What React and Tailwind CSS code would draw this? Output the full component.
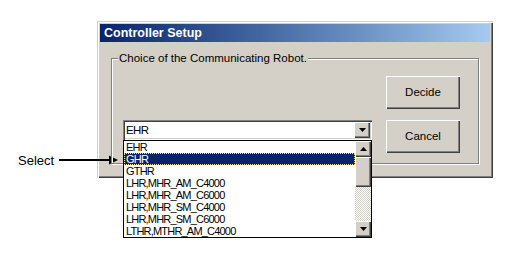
const items = [
  "EHR",
  "GHR",
  "GTHR",
  "LHR,MHR_AM_C4000",
  "LHR,MHR_AM_C6000",
  "LHR,MHR_SM_C4000",
  "LHR,MHR_SM_C6000",
  "LTHR,MTHR_AM_C4000",
];

function DownTri() {
  return (
    <svg width="7" height="4" viewBox="0 0 7 4" className="block">
      <polygon points="0,0 7,0 3.5,4" fill="#000" />
    </svg>
  );
}

function UpTri() {
  return (
    <svg width="7" height="4" viewBox="0 0 7 4" className="block">
      <polygon points="0,4 7,4 3.5,0" fill="#000" />
    </svg>
  );
}

const raised =
  "shadow-[inset_1px_1px_#ffffff,inset_-1px_-1px_#404040,inset_-2px_-2px_#808080]";

export default function App() {
  return (
    <div className="relative w-[506px] h-[261px] overflow-hidden bg-white pt-[21px] pl-[97px] font-['Liberation_Sans',Arial,sans-serif] text-black">
      {/* annotation */}
      <div className="absolute left-[18px] top-[153px] text-[13px] leading-[15px]">Select</div>
      <svg
        className="absolute left-[59px] top-[155px]"
        width="60"
        height="10"
        viewBox="0 0 60 10"
      >
        <rect x="0" y="4" width="52" height="2" fill="#000" />
        <polygon points="50,0.5 59,5 50,9.5" fill="#000" />
      </svg>

      {/* window */}
      <div className="w-[396px] h-[157px] bg-[#d4d0c8] p-[3px] shadow-[inset_1px_1px_#d4d0c8,inset_2px_2px_#ffffff,inset_-1px_-1px_#404040,inset_-2px_-2px_#808080]">
        <div className="h-[18px] bg-linear-to-r from-[#0a246a] to-[#a6caf0] pl-[4px] text-[12.5px] font-bold leading-[18px] text-white">
          Controller Setup
        </div>

        {/* group box */}
        <div className="relative mx-[11px] mt-[16px] border border-[#808080] shadow-[inset_1px_1px_#ffffff,1px_1px_#ffffff] pt-[17px] pb-[10px] pl-[11px] pr-[18px]">
          <div className="absolute -top-[7px] left-[6px] bg-[#d4d0c8] px-[1px] text-[11.5px] leading-[13px]">
            Choice of the Communicating Robot.
          </div>

          <div className="grid grid-cols-[249px_74px] gap-x-[14px] gap-y-[11px]">
            <div />
            <div
              className={`flex h-[33px] items-center justify-center text-[11.5px] ${raised}`}
            >
              Decide
            </div>

            {/* combo box */}
            <div className="relative h-[20px] bg-white shadow-[inset_1px_1px_#808080,inset_2px_2px_#404040,inset_-1px_-1px_#ffffff,inset_-2px_-2px_#d4d0c8] p-[2px] flex">
              <div className="flex-1 pl-[1px] text-[11.5px] leading-[16px] tracking-[-0.6px]">EHR</div>
              <div
                className={`flex w-[16px] h-[16px] items-center justify-center bg-[#d4d0c8] ${raised}`}
              >
                <DownTri />
              </div>

              {/* dropdown list */}
              <div className="absolute left-0 top-[20px] z-10 flex w-[249px] border border-black bg-white">
                <div className="flex-1">
                  {items.map((it, i) =>
                    i === 1 ? (
                      <div
                        key={it}
                        className="h-[12px] bg-[#0a246a] border border-dotted border-[#f2dc90] pl-[1px] text-[11px] leading-[10px] tracking-[-0.7px] text-white"
                      >
                        {it}
                      </div>
                    ) : (
                      <div
                        key={it}
                        className="h-[12px] pl-[2px] text-[11px] leading-[12px] tracking-[-0.8px]"
                      >
                        {it}
                      </div>
                    )
                  )}
                </div>
                <div className="flex w-[16px] flex-col">
                  <div
                    className={`flex h-[16px] items-center justify-center bg-[#d4d0c8] ${raised}`}
                  >
                    <UpTri />
                  </div>
                  <div className={`h-[30px] bg-[#d4d0c8] ${raised}`} />
                  <div className="flex-1 bg-[repeating-conic-gradient(#ffffff_0%_25%,#d4d0c8_0%_50%)] bg-size-[2px_2px]" />
                  <div
                    className={`flex h-[16px] items-center justify-center bg-[#d4d0c8] ${raised}`}
                  >
                    <DownTri />
                  </div>
                </div>
              </div>
            </div>

            <div
              className={`flex h-[33px] items-center justify-center text-[11.5px] ${raised}`}
            >
              Cancel
            </div>
          </div>
        </div>
      </div>
    </div>
  );
}
